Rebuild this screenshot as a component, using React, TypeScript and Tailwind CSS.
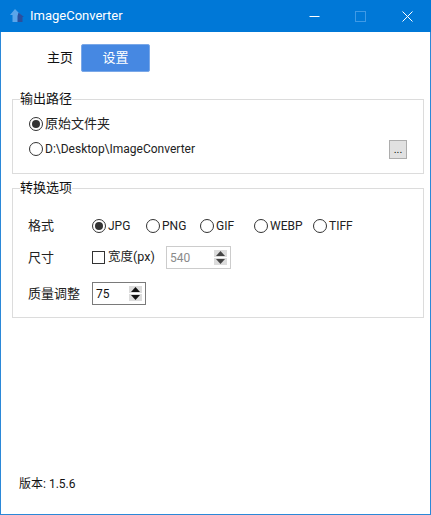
import type { ReactNode } from "react";

const FONT = "font-['Roboto','Noto_Sans_CJK_SC',sans-serif]";

function Radio({ checked, label, className }: { checked?: boolean; label: string; className: string }) {
  return (
    <label className={`flex items-center gap-[2px] ${className}`}>
      <span className="flex h-[14px] w-[14px] shrink-0 items-center justify-center rounded-full border border-[#333333] bg-white">
        {checked && <span className="h-[8px] w-[8px] rounded-full bg-[#333333]" />}
      </span>
      <span>{label}</span>
    </label>
  );
}

function Spin({ disabled }: { disabled?: boolean }) {
  const fill = disabled ? "#444444" : "#111111";
  return (
    <div className="flex flex-col gap-px">
      <span className="flex h-[7px] w-[13px] items-center justify-center bg-[#dcdcdc]">
        <svg width="9" height="5" viewBox="0 0 9 5">
          <path d="M4.5 0 L9 5 L0 5 Z" fill={fill} />
        </svg>
      </span>
      <span className="flex h-[7px] w-[13px] items-center justify-center bg-[#dcdcdc]">
        <svg width="9" height="5" viewBox="0 0 9 5">
          <path d="M0 0 L9 0 L4.5 5 Z" fill={fill} />
        </svg>
      </span>
    </div>
  );
}

function Group({ title, className, children }: { title: string; className: string; children: ReactNode }) {
  return (
    <fieldset className={`ml-[11px] mr-[6px] border border-[#dcdcdc] ${className}`}>
      <legend className="ml-[7px] h-[20px] px-0 text-[13px] leading-[20px] text-[#111111]">{title}</legend>
      <div className="pl-[16px] pr-[16px]">{children}</div>
    </fieldset>
  );
}

export default function App() {
  return (
    <div className={`${FONT} flex h-[515px] w-[431px] flex-col border-x border-b border-[#2b88d8] bg-white text-[12px] text-[#222222]`}>
      {/* Title bar */}
      <div className="-mx-px flex h-[32px] shrink-0 items-center bg-[#0078d7] text-white">
        <svg className="ml-[9px]" width="16" height="16" viewBox="0 0 16 16">
          <path d="M6 1 L12 7 L9.5 7 L9.5 14 L3.5 14 L3.5 7 L1 7 Z" fill="#5aa5ea" />
          <path d="M9.5 4.5 L15 9 L13.5 9 L13.5 14 L8.5 14 L8.5 8 Z" fill="#2a4f9e" />
        </svg>
        <span className="ml-[5px] text-[13px]">ImageConverter</span>
        <div className="ml-auto flex items-center">
          <svg className="mr-[35px]" width="11" height="11" viewBox="0 0 11 11">
            <path d="M0.5 5.5 H10.5" stroke="white" strokeWidth="1" />
          </svg>
          <svg className="mr-[36px]" width="11" height="11" viewBox="0 0 11 11">
            <rect x="0.5" y="0.5" width="10" height="10" fill="none" stroke="#3f9ae6" strokeWidth="1" />
          </svg>
          <svg className="mr-[18px]" width="11" height="11" viewBox="0 0 11 11">
            <path d="M0.5 0.5 L10.5 10.5 M10.5 0.5 L0.5 10.5" stroke="white" strokeWidth="1" />
          </svg>
        </div>
      </div>

      {/* Tabs */}
      <div className="mt-[12px] flex h-[28px] items-center text-[13px]">
        <span className="ml-[46px] text-[#111111]">主页</span>
        <button className="ml-[8px] h-[28px] w-[69px] rounded-[2px] border border-[#7aa8e8] bg-[#4688e2] text-[13px] text-white">
          设置
        </button>
      </div>

      {/* 输出路径 */}
      <Group title="输出路径" className="mt-[17px] h-[85px]">
        <Radio checked label="原始文件夹" className="mt-[5px] h-[20px] text-[13px]" />
        <div className="mt-[5px] flex h-[20px] items-center justify-between">
          <Radio label="D:\Desktop\ImageConverter" className="" />
          <button className="flex h-[19px] w-[18px] items-center justify-center border border-[#adadad] bg-[#e1e1e1] text-[11px] leading-none text-[#111111]">
            ...
          </button>
        </div>
      </Group>

      {/* 转换选项 */}
      <Group title="转换选项" className="mt-[4px] h-[140px]">
        <div className="mt-[18px] flex h-[20px] items-center">
          <span className="w-[63px] -indent-px text-[13px]">格式</span>
          <Radio checked label="JPG" className="w-[54px]" />
          <Radio label="PNG" className="w-[54px]" />
          <Radio label="GIF" className="w-[54px]" />
          <Radio label="WEBP" className="w-[59px]" />
          <Radio label="TIFF" className="w-[50px]" />
        </div>

        <div className="mt-[10px] flex h-[23px] items-center">
          <span className="w-[63px] -indent-px text-[13px]">尺寸</span>
          <label className="flex w-[74px] items-center gap-[3px]">
            <span className="h-[13px] w-[13px] shrink-0 border border-[#333333] bg-white" />
            <span className="text-[12.5px]">宽度(px)</span>
          </label>
          <div className="flex h-[23px] w-[65px] items-center justify-between border border-[#cccccc] pl-[3px] pr-[3px] text-[#8a8a8a]">
            <span>540</span>
            <Spin disabled />
          </div>
        </div>

        <div className="mt-[13px] flex h-[23px] items-center">
          <span className="w-[63px] -indent-px text-[13px]">质量调整</span>
          <div className="flex h-[23px] w-[54px] items-center justify-between border border-[#7a7a7a] pl-[3px] pr-[3px] text-[#111111]">
            <span>75</span>
            <Spin />
          </div>
        </div>
      </Group>

      <div className="mt-auto mb-[21px] ml-[18px] h-[18px] leading-[18px] text-[#111111]">版本: 1.5.6</div>
    </div>
  );
}
